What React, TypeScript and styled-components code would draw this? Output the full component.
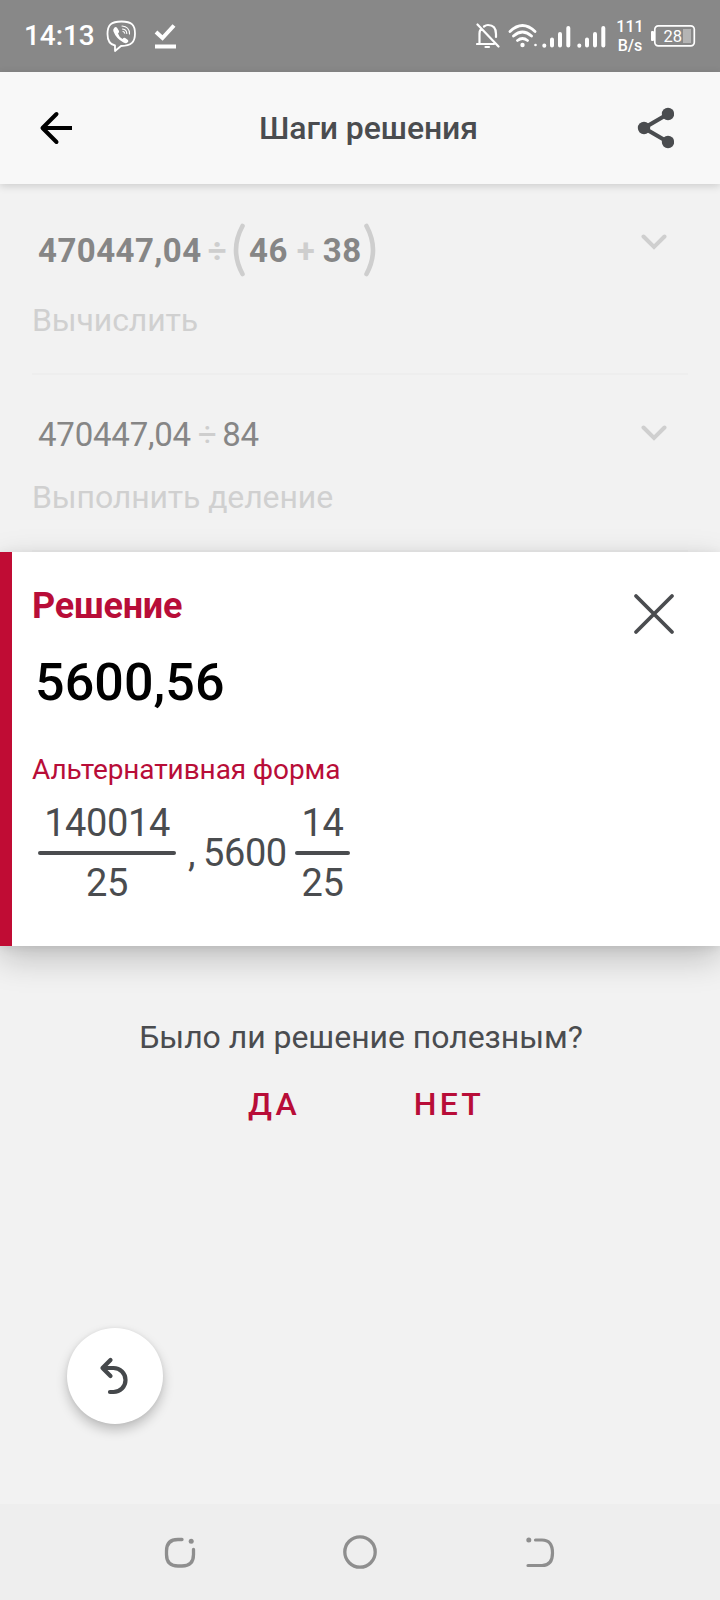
import React from "react";
import styled, { createGlobalStyle } from "styled-components";

const ink = "#4a4c4f";
const accent = "#b80d38";

const GlobalStyle = createGlobalStyle`
  * { box-sizing: border-box; }
  body { margin: 0; background: #f2f2f2; font-family: Roboto, "Liberation Sans", sans-serif; }
  button { border: 0; padding: 0; margin: 0; background: none; font: inherit; color: inherit; display: flex; }
  svg { display: block; flex: none; }
`;

const Screen = styled.div`
  width: 720px;
  height: 1600px;
  display: flex;
  flex-direction: column;
  background: #f2f2f2;
  overflow: hidden;
`;

const StatusBar = styled.div`
  height: 72px;
  flex: none;
  display: flex;
  align-items: center;
  padding: 0 24px;
  background: #888;
  color: #fff;
`;

const Clock = styled.span`
  width: 82px;
  font-size: 28px;
  font-weight: 500;
  line-height: 72px;
  letter-spacing: -0.1px;
`;

const StatusGroup = styled.div<{ $gap: number; $end?: boolean }>`
  display: flex;
  align-items: center;
  gap: ${(p) => p.$gap}px;
  margin-left: ${(p) => (p.$end ? "auto" : "0")};
`;

const WifiIcon = styled.svg`
  margin: 0 -2px 0 2px;
`;

const NetSpeed = styled.div`
  width: 32px;
  padding-left: 4px;
  font-size: 16px;
  font-weight: 500;
  line-height: 19px;
  text-align: center;
  white-space: nowrap;
`;

const AppBar = styled.header`
  height: 112px;
  flex: none;
  display: flex;
  align-items: center;
  justify-content: space-between;
  padding: 0 46px 0 38px;
  background: #f8f8f8;
  box-shadow: 0 2px 8px rgba(0, 0, 0, 0.16);
  z-index: 1;
`;

const Title = styled.h1`
  margin: 0 0 0 27px;
  font-size: 32px;
  font-weight: 500;
  line-height: 40px;
  letter-spacing: -0.1px;
  color: ${ink};
`;

const Step = styled.section<{ $height: number; $top: number }>`
  height: ${(p) => p.$height}px;
  flex: none;
  margin: 0 32px;
  padding: ${(p) => p.$top}px 21px 0 0;
  display: flex;
  justify-content: space-between;
  align-items: flex-start;
  border-bottom: 2px solid #eeeeee;
`;

const Expression = styled.div<{ $bold?: boolean }>`
  height: 56px;
  padding-left: 6px;
  display: flex;
  align-items: center;
  font-size: 33px;
  font-weight: ${(p) => (p.$bold ? 700 : 400)};
  letter-spacing: ${(p) => (p.$bold ? 0.45 : -0.22)}px;
  color: #868686;
`;

const Operator = styled.span<{ $before: number; $after: number }>`
  margin: 0 ${(p) => p.$after}px 0 ${(p) => p.$before}px;
  letter-spacing: 0;
  color: #cecece;
`;

const Operand = styled.span<{ $before?: number; $after?: number }>`
  margin: 0 ${(p) => p.$after ?? 0}px 0 ${(p) => p.$before ?? 0}px;
`;

const Caption = styled.div<{ $top: number }>`
  margin-top: ${(p) => p.$top}px;
  font-size: 32px;
  line-height: 40px;
  letter-spacing: -0.12px;
  color: #d0d0d0;
`;

const ChevronSlot = styled.button<{ $top: number }>`
  margin-top: ${(p) => p.$top}px;
`;

const SolutionCard = styled.section`
  height: 394px;
  flex: none;
  display: flex;
  justify-content: space-between;
  align-items: flex-start;
  padding: 34px 44px 0 20px;
  border-left: 12px solid #c00c34;
  background: #fff;
  box-shadow: 0 12px 32px rgba(0, 0, 0, 0.22), 0 2px 10px rgba(0, 0, 0, 0.08);
  z-index: 1;
`;

const SolutionTitle = styled.h2`
  margin: 0;
  font-size: 36px;
  font-weight: 700;
  line-height: 40px;
  letter-spacing: -0.25px;
  color: ${accent};
`;

const Answer = styled.div`
  margin-top: 27px;
  padding-left: 3px;
  font-size: 52px;
  font-weight: 500;
  line-height: 60px;
  letter-spacing: 0.1px;
  color: #000;
`;

const AltLabel = styled.div`
  margin-top: 40px;
  font-size: 28px;
  line-height: 34px;
  letter-spacing: -0.1px;
  color: ${accent};
`;

const AltForms = styled.div`
  display: flex;
  align-items: center;
  height: 110px;
  margin-top: 11px;
  padding-left: 6px;
  font-size: 38px;
  line-height: 54px;
  letter-spacing: -0.4px;
  color: ${ink};
`;

const Fraction = styled.div<{ $width: number }>`
  width: ${(p) => p.$width}px;
  display: flex;
  flex-direction: column;
  align-items: center;
`;

const FractionBar = styled.div`
  width: 100%;
  height: 4px;
  margin: 1px 0;
  border-radius: 2px;
  background: ${ink};
`;

const Whole = styled.span<{ $before: number; $width: number }>`
  margin-left: ${(p) => p.$before}px;
  width: ${(p) => p.$width}px;
`;

const CloseButton = styled.button`
  margin-top: 6px;
`;

const Feedback = styled.section`
  height: 382px;
  flex: none;
  padding-top: 71px;
  text-align: center;
`;

const Question = styled.p`
  margin: 0;
  padding-left: 2px;
  font-size: 32px;
  line-height: 40px;
  letter-spacing: -0.04px;
  color: ${ink};
`;

const Choices = styled.div`
  display: flex;
  justify-content: center;
  gap: 114px;
  margin-top: 27px;
  padding-left: 12px;
`;

const Choice = styled.button`
  font-size: 32px;
  font-weight: 500;
  line-height: 40px;
  letter-spacing: 3.2px;
  color: ${accent};
`;

const UndoRow = styled.div`
  flex: 1;
  padding-left: 67px;
`;

const UndoButton = styled.button`
  width: 96px;
  height: 96px;
  padding-right: 2px;
  border-radius: 50%;
  background: #fff;
  align-items: center;
  justify-content: center;
  box-shadow: 0 6px 12px rgba(0, 0, 0, 0.22), 0 0 4px rgba(0, 0, 0, 0.06);
`;

const NavBar = styled.nav`
  height: 96px;
  flex: none;
  display: flex;
  align-items: center;
  justify-content: space-between;
  padding: 0 160px;
  background: #eee;
`;

const Paren = ({ flip = false }: { flip?: boolean }) => (
  <svg width="12" height="54" viewBox="0 0 12 54" fill="none" stroke="#cecece" strokeWidth="4.600" strokeLinecap="round">
    <path d={flip ? "M2.500 3Q15.500 27 2.500 51" : "M9.500 3Q-3.500 27 9.500 51"} />
  </svg>
);

const Chevron = () => (
  <svg width="26" height="16" viewBox="0 0 26 16" fill="none" stroke="#cfcfcf" strokeWidth="4" strokeLinecap="round">
    <path d="M2.500 2.500L13 13L23.500 2.500" />
  </svg>
);

const SignalBars = () => (
  <svg width="29" height="24" viewBox="0 0 29 24" fill="none" stroke="#fff" strokeWidth="4" strokeLinecap="round">
    <path d="M2.300 21.500V21.700M10 15.500V21.500M18 10V21.500M26.300 4V21.500" />
  </svg>
);

export default function App() {
  return (
    <>
      <GlobalStyle />
      <Screen>
        <StatusBar>
          <Clock>14:13</Clock>
          <StatusGroup $gap={17}>
            <svg width="31" height="32" viewBox="0 0 31 32" fill="none" stroke="#fff" strokeLinecap="round" strokeLinejoin="round">
              <path strokeWidth="1.800" d="M9 25.500C3.500 24.500 1.500 21 1.500 14C1.500 5 5 1.500 15.500 1.500S29 5 29 13.500S25.500 26 15 26L9 31Z" />
              <path fill="#fff" stroke="none" d="M8.500 7.500Q10 6.500 11.200 8L13 11Q13.500 12 12 13.500Q13 17 16.500 19Q18 17 19.200 18L22 20Q23 21 21.500 22.500Q20 24 17.500 22.500Q10 18.500 7.300 11Q6.800 9 8.500 7.500Z" />
              <path strokeWidth="1.100" d="M16 6Q23.500 6.500 23.500 14M16.500 9Q20.700 9.500 20.800 13.500M17 11.500Q18.500 11.700 18.700 13.200" />
            </svg>
            <svg width="23" height="26" viewBox="0 0 23 26" fill="none" stroke="#fff" strokeWidth="4">
              <path d="M2 9L8.500 15L20 2.500" />
              <path d="M1 23.500H22" />
            </svg>
          </StatusGroup>
          <StatusGroup $gap={6} $end>
            <svg width="24" height="26" viewBox="0 0 24 26" fill="none" stroke="#fff" strokeWidth="2.200" strokeLinecap="round">
              <path d="M1.500 1.500L22.500 23.500M1 21H18M3.500 20.500V10.500Q3.500 8 5 6M8 3.500Q10 2 12 2Q20 2 20 11V14" />
              <path d="M9.500 24H13" />
            </svg>
            <WifiIcon width="30" height="26" viewBox="0 0 30 26" fill="none" stroke="#fff" strokeWidth="2.800" strokeLinecap="round">
              <path d="M2 8.500Q14.500 -3.500 27 8.500M5.500 13Q14.500 5 23.500 13M9.500 17.500Q14.500 13.500 19.500 17.500" />
              <circle cx="14.500" cy="22" r="2.200" fill="#fff" stroke="none" />
              <circle cx="27.500" cy="22" r="1.300" fill="#fff" stroke="none" />
            </WifiIcon>
            <SignalBars />
            <SignalBars />
            <NetSpeed>
              111
              <br />
              B/s
            </NetSpeed>
            <svg width="46" height="24" viewBox="0 0 46 24">
              <rect x="1" y="7" width="3" height="10" rx="1" fill="#fff" />
              <rect x="4.800" y="1.800" width="39.500" height="20" rx="3.500" fill="none" stroke="#fff" strokeWidth="1.700" />
              <rect x="33" y="5" width="8" height="14" fill="#b4b4b4" />
              <text x="13.500" y="18" fill="#fff" fontSize="16.500" fontFamily="Roboto, sans-serif">28</text>
            </svg>
          </StatusGroup>
        </StatusBar>

        <AppBar>
          <button aria-label="Назад">
            <svg width="36" height="34" viewBox="0 0 36 34" fill="none" stroke="#000" strokeWidth="4">
              <path d="M4 17H34" />
              <path strokeLinecap="round" strokeLinejoin="round" d="M18.500 3L4.500 17L18.500 31" />
            </svg>
          </button>
          <Title>Шаги решения</Title>
          <button aria-label="Поделиться">
            <svg width="38" height="42" viewBox="0 0 38 42" fill={ink} stroke={ink} strokeWidth="4.200">
              <path fill="none" d="M32 7L8 21L32 35" />
              <circle cx="32" cy="7" r="6.200" stroke="none" />
              <circle cx="8" cy="21" r="6.200" stroke="none" />
              <circle cx="32" cy="35" r="6.200" stroke="none" />
            </svg>
          </button>
        </AppBar>

        <Step $height={191} $top={38}>
          <div>
            <Expression $bold>
              470447,04
              <Operator $before={6} $after={7}>÷</Operator>
              <Paren />
              <Operand $before={3.6}>46</Operand>
              <Operator $before={9} $after={8}>+</Operator>
              <Operand $after={2}>38</Operand>
              <Paren flip />
            </Expression>
            <Caption $top={22}>Вычислить</Caption>
          </div>
          <ChevronSlot $top={12} aria-label="Показать шаги">
            <Chevron />
          </ChevronSlot>
        </Step>
        <Step $height={177} $top={31}>
          <div>
            <Expression>
              470447,04
              <Operator $before={7} $after={5.5}>÷</Operator>
              84
            </Expression>
            <Caption $top={15}>Выполнить деление</Caption>
          </div>
          <ChevronSlot $top={19} aria-label="Показать шаги">
            <Chevron />
          </ChevronSlot>
        </Step>

        <SolutionCard>
          <div>
            <SolutionTitle>Решение</SolutionTitle>
            <Answer>5600,56</Answer>
            <AltLabel>Альтернативная форма</AltLabel>
            <AltForms>
              <Fraction $width={138}>
                <span>140014</span>
                <FractionBar />
                <span>25</span>
              </Fraction>
              <Whole $before={12} $width={15}>,</Whole>
              <Whole $before={0} $width={92}>5600</Whole>
              <Fraction $width={55}>
                <span>14</span>
                <FractionBar />
                <span>25</span>
              </Fraction>
            </AltForms>
          </div>
          <CloseButton aria-label="Закрыть">
            <svg width="44" height="44" viewBox="0 0 44 44" fill="none" stroke={ink} strokeWidth="3.800" strokeLinecap="round">
              <path d="M4 4L40 40M40 4L4 40" />
            </svg>
          </CloseButton>
        </SolutionCard>

        <Feedback>
          <Question>Было ли решение полезным?</Question>
          <Choices>
            <Choice>ДА</Choice>
            <Choice>НЕТ</Choice>
          </Choices>
        </Feedback>

        <UndoRow>
          <UndoButton aria-label="Отменить">
            <svg width="32" height="40" viewBox="0 0 32 40" fill="none" stroke="#45484b" strokeWidth="4.200" strokeLinecap="round" strokeLinejoin="round">
              <path d="M12.500 4L4.500 12L12.500 20M4.500 12H15.500A12 12 0 0 1 15.500 36H12" />
            </svg>
          </UndoButton>
        </UndoRow>

        <NavBar>
          <svg width="40" height="40" viewBox="0 0 40 40" fill="none" stroke="#8e8e8e" strokeWidth="3.300" strokeLinecap="round">
            <path d="M22 7.500H18Q6.500 7.500 6.500 19V22.500Q6.500 34 18 34H22Q33.500 34 33.500 22.500V17.500" />
            <circle cx="31.200" cy="9.200" r="2.500" fill="#8e8e8e" stroke="none" />
          </svg>
          <svg width="40" height="40" viewBox="0 0 40 40" fill="none" stroke="#8e8e8e" strokeWidth="3.300">
            <circle cx="20" cy="20" r="15.200" />
          </svg>
          <svg width="40" height="40" viewBox="0 0 40 40" fill="none" stroke="#8e8e8e" strokeWidth="3.200" strokeLinecap="round">
            <path d="M15.500 8H22Q32.500 8 32.500 21Q32.500 33.500 22 33.500H8" />
            <circle cx="8.800" cy="8" r="2.500" fill="#8e8e8e" stroke="none" />
          </svg>
        </NavBar>
      </Screen>
    </>
  );
}
